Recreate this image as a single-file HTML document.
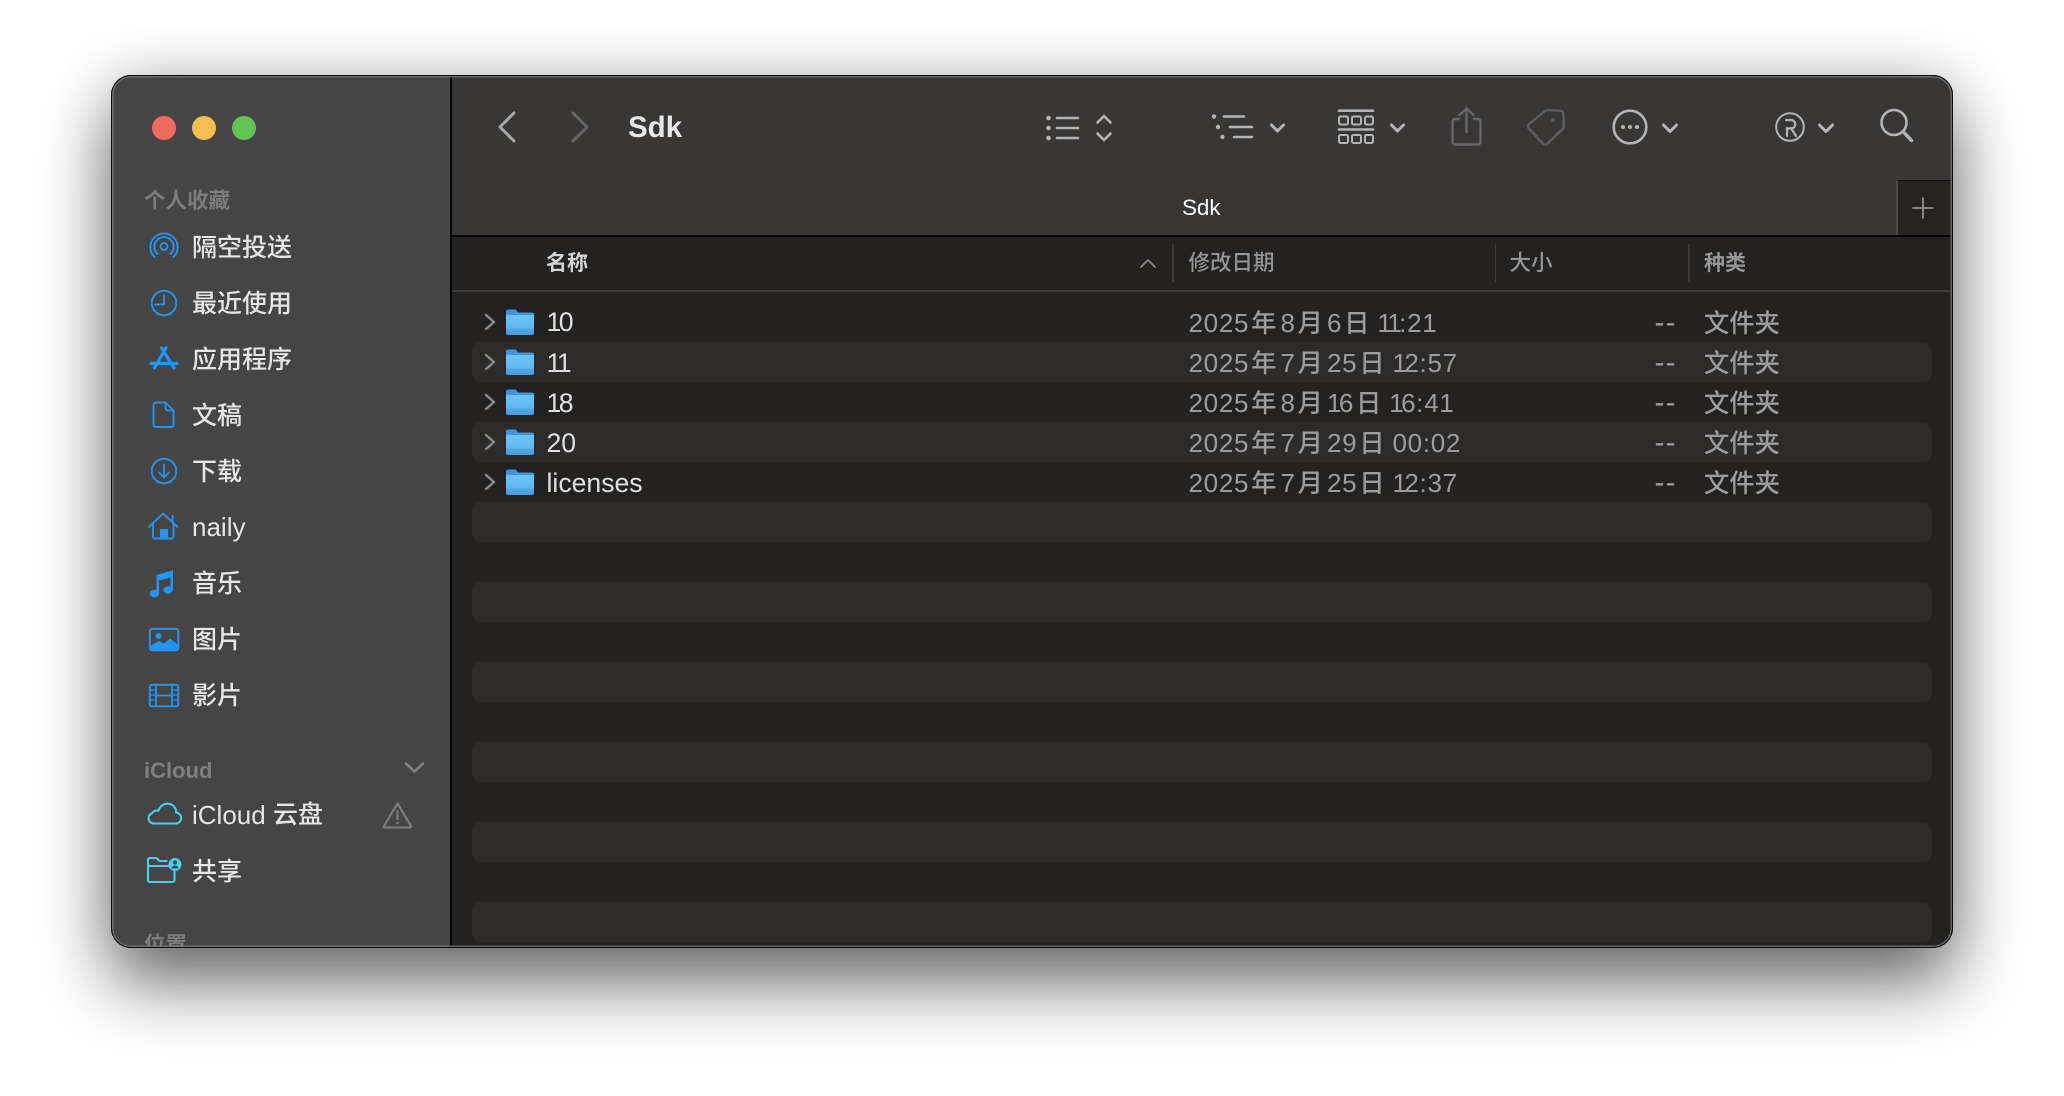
<!DOCTYPE html>
<html><head><meta charset="utf-8"><style>
html,body{margin:0;padding:0;width:2064px;height:1096px;background:#fff;overflow:hidden}
body{font-family:"Liberation Sans","Noto Sans CJK SC",sans-serif}
#win{position:absolute;left:111px;top:75px;width:1842px;height:873px;border-radius:20px;overflow:hidden;background:#232220;box-shadow:0 36px 70px rgba(0,0,0,.55),0 0 60px rgba(0,0,0,.16)}
#in{position:absolute;left:-111px;top:-75px;width:2064px;height:1096px}
.b{position:absolute}
.t{position:absolute;white-space:nowrap;line-height:1}
.s{color:#e6e6e6;font-size:25px;left:192px;font-weight:500}
.l{color:#e6e6e6;font-size:26px;left:192px}
.h{color:#7c7c7c;font-size:21.5px;left:144px;font-weight:700}
.c{color:#a8a8a8;font-size:21px;font-weight:700}
.m{font-weight:500;color:#959595;font-size:21.5px}
.n{color:#e0e0e0;font-size:26.6px;left:546.5px}
.n i{font-style:normal;letter-spacing:-2.5px}
.d{color:#9c9c9c;font-size:26px;left:1188.5px;letter-spacing:.7px}
.d i{font-style:normal;letter-spacing:-2.6px}
.d u{text-decoration:none;font-size:25.3px;letter-spacing:0;margin:0 4px 0 2px;font-weight:500}
.d u.e{margin-right:0}
.k{color:#9c9c9c;font-size:25.3px;left:1704px;font-weight:500}
.z{color:#9c9c9c;font-size:30px;left:1654.5px;letter-spacing:1px}
.st{position:absolute;left:472px;width:1460px;height:40px;border-radius:9px;background:#2c2b2a}
#edge{position:absolute;left:111px;top:75px;width:1842px;height:873px;border-radius:20px;box-sizing:border-box;border:1px solid #0c0c0c;box-shadow:inset 0 0 0 1.5px rgba(125,125,125,.75);pointer-events:none}
svg{position:absolute;left:0;top:0}
</style></head><body>
<div id="win"><div id="in">
<div class="b" style="left:111px;top:75px;width:339px;height:873px;background:#454545"></div>
<div class="b" style="left:450px;top:75px;width:2px;height:873px;background:#050505"></div>
<div class="b" style="left:452px;top:75px;width:1501px;height:160px;background:#383736"></div>
<div class="b" style="left:1896px;top:180px;width:57px;height:55px;background:#252422;border-top:1px solid #111;box-sizing:border-box;border-left:2px solid #4a4a4a"></div>
<div class="b" style="left:452px;top:235px;width:1501px;height:1.5px;background:#050505"></div>
<div class="b" style="left:452px;top:236.5px;width:1501px;height:54px;background:#232220"></div>
<div class="b" style="left:452px;top:290px;width:1501px;height:1.5px;background:#3d3c3b"></div>
<div class="b" style="left:1172px;top:244px;width:1.5px;height:38px;background:#3a3938"></div>
<div class="b" style="left:1494.5px;top:244px;width:1.5px;height:38px;background:#3a3938"></div>
<div class="b" style="left:1688px;top:244px;width:1.5px;height:38px;background:#3a3938"></div>
<div class="st" style="top:342px"></div><div class="st" style="top:422px"></div><div class="st" style="top:502px"></div><div class="st" style="top:582px"></div><div class="st" style="top:662px"></div><div class="st" style="top:742px"></div><div class="st" style="top:822px"></div><div class="st" style="top:902px"></div>

<div class="t h" style="top:191px">个人收藏</div>
<div class="t s" style="top:236px">隔空投送</div>
<div class="t s" style="top:292px">最近使用</div>
<div class="t s" style="top:348px">应用程序</div>
<div class="t s" style="top:404px">文稿</div>
<div class="t s" style="top:460px">下载</div>
<div class="t l" style="top:514px">naily</div>
<div class="t s" style="top:572px">音乐</div>
<div class="t s" style="top:628px">图片</div>
<div class="t s" style="top:684px">影片</div>
<div class="t" style="left:144px;top:760px;font-size:22px;font-weight:700;color:#7f7f7f">iCloud</div>
<div class="t l" style="top:802px">iCloud</div>
<div class="t s" style="left:273px;top:803px">云盘</div>
<div class="t s" style="top:860px">共享</div>
<div class="t h" style="top:935px">位置</div>

<div class="t" style="left:628px;top:113px;font-size:29.5px;font-weight:700;color:#e8e8e8">Sdk</div>
<div class="t" style="left:1182px;top:197px;font-size:22.4px;color:#fff">Sdk</div>
<div class="t c" style="left:546px;top:252.5px;color:#d4d4d4">名称</div>
<div class="t c m" style="left:1188.5px;top:252.5px">修改日期</div>
<div class="t c m" style="left:1509.5px;top:252.5px">大小</div>
<div class="t c" style="left:1704px;top:252.5px;color:#959595">种类</div>

<div class="t n" style="top:309px"><i>1</i>0</div><div class="t n" style="top:349.5px"><i>1</i><i>1</i></div><div class="t n" style="top:389.5px"><i>1</i>8</div><div class="t n" style="top:429.5px">20</div><div class="t n" style="top:469.5px">licenses</div>
<div class="t d" style="top:310px">2025<u>年</u>8<u>月</u>6<u class="e">日</u> <i>1</i><i>1</i>:2<i>1</i></div>
<div class="t d" style="top:350px">2025<u>年</u>7<u>月</u>25<u class="e">日</u> <i>1</i>2:57</div>
<div class="t d" style="top:390px">2025<u>年</u>8<u>月</u><i>1</i>6<u class="e">日</u> <i>1</i>6:4<i>1</i></div>
<div class="t d" style="top:430px">2025<u>年</u>7<u>月</u>29<u class="e">日</u> 00:02</div>
<div class="t d" style="top:470px">2025<u>年</u>7<u>月</u>25<u class="e">日</u> <i>1</i>2:37</div>
<div class="t z" style="top:308px">--</div><div class="t z" style="top:348px">--</div><div class="t z" style="top:388px">--</div><div class="t z" style="top:428px">--</div><div class="t z" style="top:468px">--</div>
<div class="t k" style="top:311.500px">文件夹</div><div class="t k" style="top:351.500px">文件夹</div><div class="t k" style="top:391.500px">文件夹</div><div class="t k" style="top:431.500px">文件夹</div><div class="t k" style="top:471.500px">文件夹</div>

<svg width="2064" height="1096" viewBox="0 0 2064 1096" fill="none">
<defs>
<linearGradient id="fg" x1="0" y1="0" x2="0" y2="1"><stop offset="0" stop-color="#6ec6fb"/><stop offset=".7" stop-color="#5fb8f3"/><stop offset=".72" stop-color="#52a8e8"/><stop offset="1" stop-color="#4a9cdf"/></linearGradient>
<g id="folder"><path d="M506 311.500a2 2 0 0 1 2-2h7.500l3 3h13.500a2 2 0 0 1 2 2V320h-28z" fill="#3f93d9"/><rect x="506" y="313.500" width="28" height="21.500" rx="2" fill="url(#fg)"/><rect x="506" y="313.500" width="28" height="1.500" fill="#4496da"/><path d="M506 329.500h28M506 332h28" stroke="#4a9ee0" stroke-width=".8"/></g>
<path id="chev" d="M486 315l8 7-8 7" stroke="#8a8a8a" stroke-width="2.400" stroke-linecap="round" stroke-linejoin="round"/>
</defs>
<circle cx="164" cy="128" r="12" fill="#ed6a5e"/><circle cx="204" cy="128" r="12" fill="#f4bf4f"/><circle cx="244" cy="128" r="12" fill="#61c554"/>

<g stroke="#2196f7" stroke-width="1.900" stroke-linecap="round" stroke-linejoin="round">
<path d="M154.500 257A13.700 13.700 0 1 1 173.500 257"/>
<path d="M157.500 254A9.700 9.700 0 1 1 170.500 254" />
<circle cx="164" cy="246.500" r="3.500"/>
<circle cx="164" cy="303" r="12.300"/><path d="M164 295v9.500h-9" stroke-width="1.800"/>
<circle cx="164" cy="471" r="12.300"/><path d="M164 464.500v12.500M159 472.500l5 5 5-5" stroke-width="1.800"/>
<path d="M166 347.800L154.500 368M161.500 347.800L174 368M151 363.500h26" stroke-width="3.200"/>
<path d="M153.500 424.500V405a2.500 2.500 0 0 1 2.500-2.500h9.500l8 8v14a2.500 2.500 0 0 1-2.500 2.500h-15a2.500 2.500 0 0 1-2.500-2.500z"/>
<path d="M165.500 402.500v5.500a2.500 2.500 0 0 0 2.500 2.500h5.500" stroke-width="1.800"/>
<path d="M149 527l14-13.500 14.500 13.500M172.500 516v6M153 524v12.500a2 2 0 0 0 2 2h16.500a2 2 0 0 0 2-2V524"/>
<rect x="149.800" y="628.800" width="28.500" height="21.500" rx="2.500"/>
<rect x="149.800" y="684.800" width="28.500" height="21.500" rx="2"/>
<path d="M156 685v21M172 685v21M156 695.500h16" stroke-width="1.800"/>
<path d="M150 690h6M150 695h6M150 700h6M172 690h6M172 695h6M172 700h6" stroke-width="1.200"/>
</g>
<rect x="160" y="529" width="8" height="9" fill="#2196f7"/>
<path d="M156.500 575L173 570.200V590h-2.500V577.500L159 580.500V594h-2.500z" fill="#2196f7"/>
<ellipse cx="154.500" cy="593.500" rx="4.600" ry="3.800" fill="#2196f7"/><ellipse cx="168" cy="590" rx="4.600" ry="3.800" fill="#2196f7"/>
<circle cx="158.500" cy="636" r="3" fill="#2196f7"/>
<path d="M150 646l9-5 5 2.500 6-5 9 7V648a3 3 0 0 1-3 3h-23a3 3 0 0 1-3-3z" fill="#2196f7"/>

<path d="M154 823.500a5.300 5.300 0 0 1-2-10.300 7 7 0 0 1 6.500-2.500 9.500 9.500 0 0 1 9-7c5 0 8.800 4 8.800 9a5.300 5.300 0 0 1-1 10.800z" stroke="#3fd2f2" stroke-width="2.100" stroke-linejoin="round"/>
<path d="M170 866h-22M148 881v-21.500a1.500 1.500 0 0 1 1.500-1.500h7l3 3h8M148 880.500a1.500 1.500 0 0 0 1.500 1.500h23a2 2 0 0 0 2-2v-10" stroke="#3fd2f2" stroke-width="2.100"/>
<circle cx="175" cy="864.500" r="6.500" fill="#3fd2f2"/><circle cx="175" cy="862.500" r="2.100" fill="#454545"/><path d="M171.500 868.500a3.500 3 0 0 1 7 0z" fill="#454545"/>
<path d="M397.500 803.500l13.500 22.500a1 1 0 0 1-1 1.500h-25a1 1 0 0 1-1-1.500z" stroke="#7c7c7c" stroke-width="2.200" stroke-linejoin="round"/>
<path d="M397.500 811v8" stroke="#7c7c7c" stroke-width="2.200" stroke-linecap="round"/><circle cx="397.500" cy="823" r="1.400" fill="#7c7c7c"/>
<path d="M406 763.500l8.500 8 8.500-8" stroke="#7f7f7f" stroke-width="2.600" stroke-linecap="round" stroke-linejoin="round"/>

<path d="M514 114l-14 14 14 14" stroke="#a8a8a8" stroke-width="3" stroke-linecap="round" stroke-linejoin="round" transform="translate(0 -1)"/>
<path d="M573 114l14 14-14 14" stroke="#656565" stroke-width="3" stroke-linecap="round" stroke-linejoin="round" transform="translate(0 -1)"/>

<g stroke="#b4b4b4" stroke-width="2.600" stroke-linecap="round" stroke-linejoin="round">
<path d="M1057 118h21M1057 128h21M1057 138h21"/>
<path d="M1097.500 122.500l6.500-6.500 6.500 6.500M1097.500 133.500l6.500 6.500 6.500-6.500"/>
<path d="M1224 116.500h20M1230 127h22M1234 137h18"/>
<path d="M1339 110.700h34M1339 129.500h34"/>
<circle cx="1630" cy="127" r="16.300"/>
<circle cx="1790" cy="127" r="13.800" stroke-width="2"/>
<circle cx="1894" cy="122.500" r="12.500"/><path d="M1903.500 132l8 8.500" stroke-width="3.400"/>
<path d="M1786 120h5a4 4 0 0 1 0 8.500h-4M1787 128v8M1791 128l5 8" stroke-width="2.200"/>
</g>
<g stroke="#b4b4b4" stroke-width="3" stroke-linecap="round" stroke-linejoin="round">
<path d="M1271.500 125l6 6 6-6M1391.500 125l6 6 6-6M1663.500 125l6.500 6.500 6.500-6.500M1819.500 125l6.500 6.500 6.500-6.500"/>
</g>
<g fill="#b4b4b4"><circle cx="1048.500" cy="118" r="2.300"/><circle cx="1048.500" cy="128" r="2.300"/><circle cx="1048.500" cy="138" r="2.300"/>
<circle cx="1214" cy="116.500" r="2.200"/><circle cx="1218" cy="127" r="2.200"/><circle cx="1222.500" cy="137" r="2.200"/>
<circle cx="1623" cy="127" r="2"/><circle cx="1630" cy="127" r="2"/><circle cx="1637" cy="127" r="2"/></g>
<g stroke="#b4b4b4" stroke-width="2" fill="none"><rect x="1339" y="116.500" width="9" height="8" rx="1.500"/><rect x="1352" y="116.500" width="9" height="8" rx="1.500"/><rect x="1365" y="116.500" width="8" height="8" rx="1.500"/><rect x="1339" y="135" width="9" height="8" rx="1.500"/><rect x="1352" y="135" width="9" height="8" rx="1.500"/><rect x="1365" y="135" width="8" height="8" rx="1.500"/></g>
<path d="M1459 119h-4a2.500 2.500 0 0 0-2.500 2.500v20.500a2.500 2.500 0 0 0 2.500 2.500h23a2.500 2.500 0 0 0 2.500-2.500v-20.500a2.500 2.500 0 0 0-2.500-2.500h-4M1466.500 132v-23M1459.500 115l7-6.500 7 6.500" stroke="#666" stroke-width="2.400" stroke-linecap="round" stroke-linejoin="round"/>
<path d="M1529 124l16-13a3 3 0 0 1 2-.8l13.500.5a3 3 0 0 1 2.800 2.800l.5 13a3 3 0 0 1-1 2.300l-15.500 15a3 3 0 0 1-4.200 0l-14.200-15.300a3 3 0 0 1 .1-4.500z" stroke="#5e5e5e" stroke-width="2.400" stroke-linejoin="round"/><circle cx="1553" cy="120" r="2" fill="#5e5e5e"/>
<path d="M1141 267l7-7 7 7" stroke="#8a8a8a" stroke-width="1.800" stroke-linecap="round" stroke-linejoin="round"/>
<path d="M1923 198v20M1913 208h20" stroke="#8e8e8e" stroke-width="1.800" stroke-linecap="round"/>

<use href="#folder"/><use href="#folder" y="40"/><use href="#folder" y="80"/><use href="#folder" y="120"/><use href="#folder" y="160"/>
<use href="#chev"/><use href="#chev" y="40"/><use href="#chev" y="80"/><use href="#chev" y="120"/><use href="#chev" y="160"/>
</svg>
</div></div>
<div id="edge"></div>
</body></html>
